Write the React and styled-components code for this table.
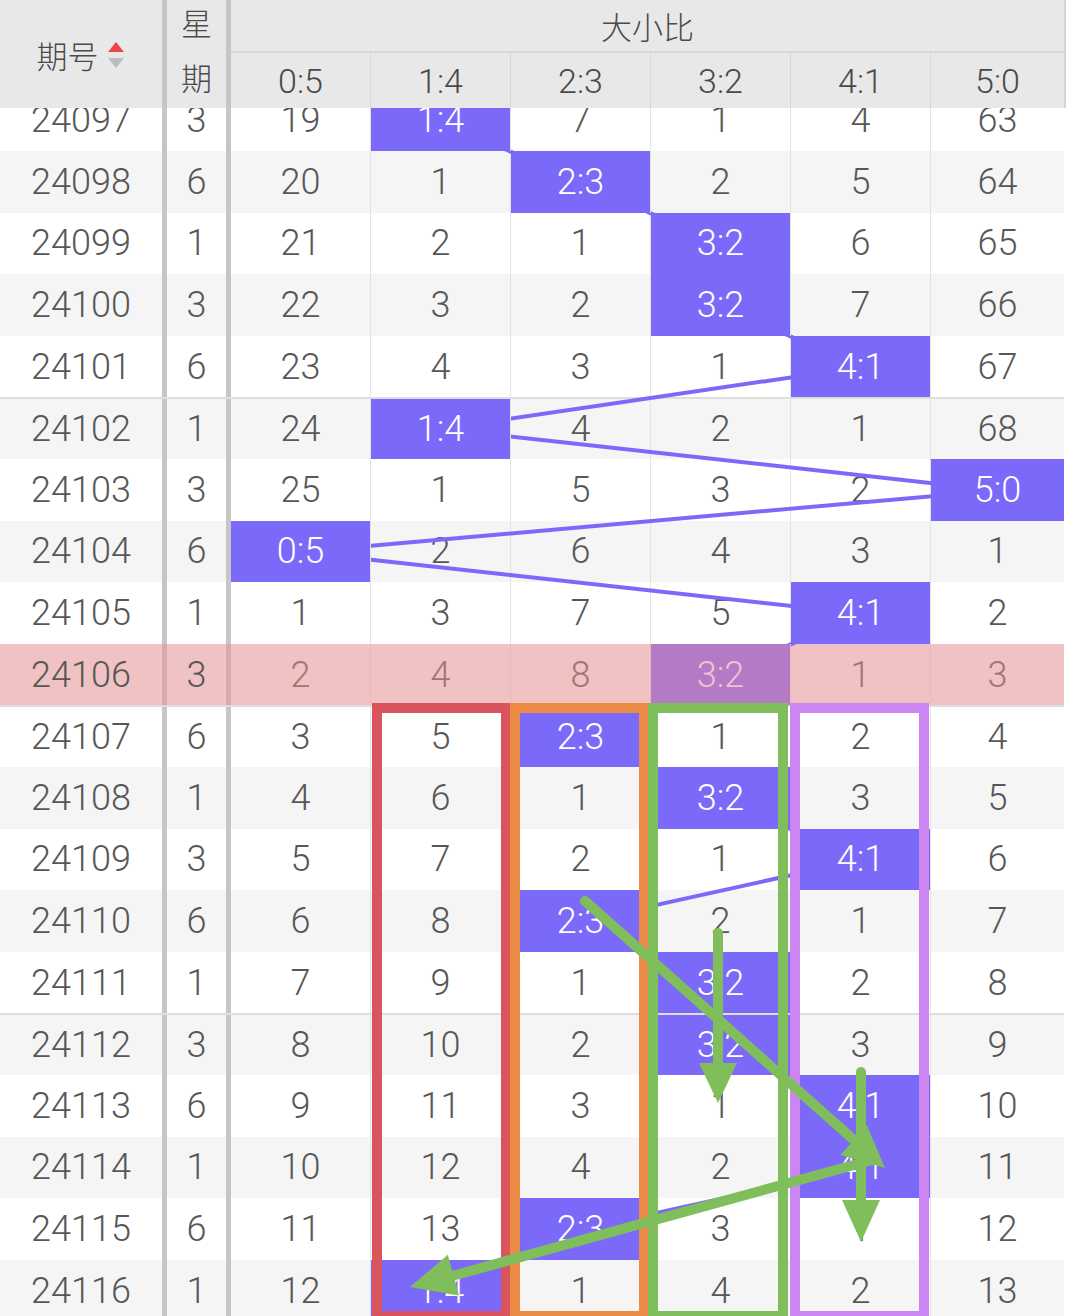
import React from "react";
import styled, { createGlobalStyle } from "styled-components";

const GlobalStyle = createGlobalStyle`
  * { box-sizing: border-box; }
  body { margin: 0; background: #fff; }
`;

const COLS = ["0:5", "1:4", "2:3", "3:2", "4:1", "5:0"];
const GRID = "162px 5px 59px 5px repeat(5, 140px) 133px";
const ROW_H = 61.6;
const PURPLE = "#7b69fa";

const ROWS = [
  ["24097", 3, [19, "1:4", 7, 1, 4, 63]],
  ["24098", 6, [20, 1, "2:3", 2, 5, 64]],
  ["24099", 1, [21, 2, 1, "3:2", 6, 65]],
  ["24100", 3, [22, 3, 2, "3:2", 7, 66]],
  ["24101", 6, [23, 4, 3, 1, "4:1", 67]],
  ["24102", 1, [24, "1:4", 4, 2, 1, 68]],
  ["24103", 3, [25, 1, 5, 3, 2, "5:0"]],
  ["24104", 6, ["0:5", 2, 6, 4, 3, 1]],
  ["24105", 1, [1, 3, 7, 5, "4:1", 2]],
  ["24106", 3, [2, 4, 8, "3:2", 1, 3]],
  ["24107", 6, [3, 5, "2:3", 1, 2, 4]],
  ["24108", 1, [4, 6, 1, "3:2", 3, 5]],
  ["24109", 3, [5, 7, 2, 1, "4:1", 6]],
  ["24110", 6, [6, 8, "2:3", 2, 1, 7]],
  ["24111", 1, [7, 9, 1, "3:2", 2, 8]],
  ["24112", 3, [8, 10, 2, "3:2", 3, 9]],
  ["24113", 6, [9, 11, 3, 1, "4:1", 10]],
  ["24114", 1, [10, 12, 4, 2, "4:1", 11]],
  ["24115", 6, [11, 13, "2:3", 3, 1, 12]],
  ["24116", 1, [12, "1:4", 1, 4, 2, 13]],
];

const HL_INDEX = 9;

const Page = styled.div`
  position: relative;
  width: 1068px;
  height: 1316px;
  overflow: hidden;
  background: #fff;
  font-family: Roboto, "Noto Sans CJK SC", sans-serif;
  font-weight: 300;
`;

const Header = styled.div`
  position: relative;
  z-index: 5;
  display: grid;
  grid-template-columns: ${GRID};
  grid-template-rows: 53px 55px;
  width: 1066px;
  background: #e8e8e8;
  color: #4a4a4a;
  border-right: 2px solid #d4d4d4;
`;

const PeriodHead = styled.div`
  grid-row: 1 / 3;
  grid-column: 1;
  display: flex;
  align-items: center;
  justify-content: center;
  gap: 9px;
  font-size: 31px;
  padding-right: 2px;
`;

const SortIcon = styled.span`
  display: inline-flex;
  flex-direction: column;
  gap: 6px;
  margin-top: 2px;
`;

const Tri = styled.span`
  width: 0;
  height: 0;
  border-left: 8.5px solid transparent;
  border-right: 8.5px solid transparent;
  ${(p) =>
    p.$up
      ? `border-bottom: 10px solid #ec4646;`
      : `border-top: 10px solid #bdbdbd;`}
`;

const HeadBar = styled.div`
  grid-row: 1 / 3;
  grid-column: ${(p) => p.$col};
  background: #c6c6c6;
`;

const WeekHead = styled.div`
  grid-row: 1 / 3;
  grid-column: 3;
  display: flex;
  flex-direction: column;
  align-items: center;
  justify-content: center;
  font-size: 31px;
  line-height: 55px;
  padding-bottom: 4px;
`;

const GroupHead = styled.div`
  grid-row: 1;
  grid-column: 5 / 11;
  display: flex;
  align-items: center;
  justify-content: center;
  font-size: 31px;
  border-bottom: 2px solid #d8d8d8;
`;

const SubHead = styled.div`
  grid-row: 2;
  display: flex;
  align-items: center;
  justify-content: center;
  font-size: 34px;
  border-right: ${(p) => (p.$last ? "none" : "1px solid #d8d8d8")};
`;

const Body = styled.div`
  position: relative;
  margin-top: -18.5px;
`;

const Row = styled.div`
  display: grid;
  grid-template-columns: ${GRID};
  width: 1064px;
  height: ${ROW_H}px;
  background: ${(p) => (p.$hl ? "#f0c2c4" : p.$alt ? "#f5f5f5" : "#fff")};
  border-top: ${(p) => (p.$groupStart ? "2px solid #dedede" : "none")};
  font-size: 36px;
`;

const TextCell = styled.div`
  display: flex;
  align-items: center;
  justify-content: center;
  color: #575757;
`;

const Bar = styled.div`
  background: ${(p) => (p.$hl ? "#d8aaab" : "#c6c6c6")};
`;

const DataCell = styled.div`
  display: flex;
  align-items: center;
  justify-content: center;
  border-right: ${(p) =>
    p.$last ? "none" : `1px solid ${p.$hl ? "#e6b9bb" : "#e3e3e3"}`};
  ${(p) => (p.$on ? "position: relative; z-index: 2;" : "")}
  background: ${(p) =>
    p.$on ? (p.$hl ? "#b57ac6" : PURPLE) : "transparent"};
  color: ${(p) =>
    p.$on ? (p.$hl ? "#f0c2d2" : "#fff") : p.$hl ? "#a67475" : "#575757"};
`;

const ChartLines = styled.svg`
  position: absolute;
  top: 0;
  left: 0;
  z-index: 1;
  pointer-events: none;
`;

const Annotations = styled.svg`
  position: absolute;
  top: 0;
  left: 0;
  z-index: 10;
  pointer-events: none;
`;

const colCenter = (c) => (c === 5 ? 997.5 : 300.5 + 140 * c);

function HitPath() {
  const pts = ROWS.map((r, i) => {
    const c = r[2].findIndex((v) => typeof v === "string");
    return `${colCenter(c)},${i * ROW_H + ROW_H / 2}`;
  });
  return (
    <ChartLines width="1064" height={ROWS.length * ROW_H}>
      <polyline
        points={pts.join(" ")}
        fill="none"
        stroke={PURPLE}
        strokeWidth="4"
        strokeLinejoin="round"
      />
    </ChartLines>
  );
}

const GREEN = "#80be5c";

function Marks() {
  return (
    <Annotations width="1068" height="1316">
      <g fill="none" strokeWidth="10">
        <rect x="377" y="708" width="129" height="608" stroke="#d9545c" />
        <rect x="515" y="708" width="129" height="608" stroke="#ec8b45" />
        <rect x="653" y="708" width="130" height="608" stroke={GREEN} />
        <rect x="795" y="708" width="129" height="608" stroke="#cc86f2" />
      </g>
      <g stroke={GREEN} strokeWidth="10" strokeLinecap="round" fill="none">
        <line x1="585" y1="901" x2="855" y2="1141" />
        <line x1="718" y1="933" x2="718" y2="1066" />
        <line x1="861" y1="1072" x2="861" y2="1203" />
        <line x1="872" y1="1160" x2="452" y2="1276" />
      </g>
      <g fill={GREEN}>
        <polygon points="885,1168 840.3,1155 866.9,1125.2" />
        <polygon points="699,1063 737,1063 718,1103" />
        <polygon points="842,1200 880,1200 861,1242" />
        <polygon points="410,1287 447.8,1254.8 459,1295.4" />
      </g>
    </Annotations>
  );
}

export default function App() {
  return (
    <>
      <GlobalStyle />
      <Page>
        <Header>
          <PeriodHead>
            期号
            <SortIcon>
              <Tri $up />
              <Tri />
            </SortIcon>
          </PeriodHead>
          <HeadBar $col={2} />
          <WeekHead>
            <span>星</span>
            <span>期</span>
          </WeekHead>
          <HeadBar $col={4} />
          <GroupHead>大小比</GroupHead>
          {COLS.map((c, i) => (
            <SubHead key={c} $last={i === COLS.length - 1}>
              {c}
            </SubHead>
          ))}
        </Header>
        <Body>
          <HitPath />
          {ROWS.map(([period, week, vals], i) => {
            const hl = i === HL_INDEX;
            return (
              <Row
                key={period}
                $alt={i % 2 === 1}
                $hl={hl}
                $groupStart={i > 0 && i % 5 === 0}
              >
                <TextCell>{period}</TextCell>
                <Bar $hl={hl} />
                <TextCell>{week}</TextCell>
                <Bar $hl={hl} />
                {vals.map((v, j) => (
                  <DataCell
                    key={j}
                    $on={typeof v === "string"}
                    $hl={hl}
                    $last={j === vals.length - 1}
                  >
                    {v}
                  </DataCell>
                ))}
              </Row>
            );
          })}
        </Body>
        <Marks />
      </Page>
    </>
  );
}
